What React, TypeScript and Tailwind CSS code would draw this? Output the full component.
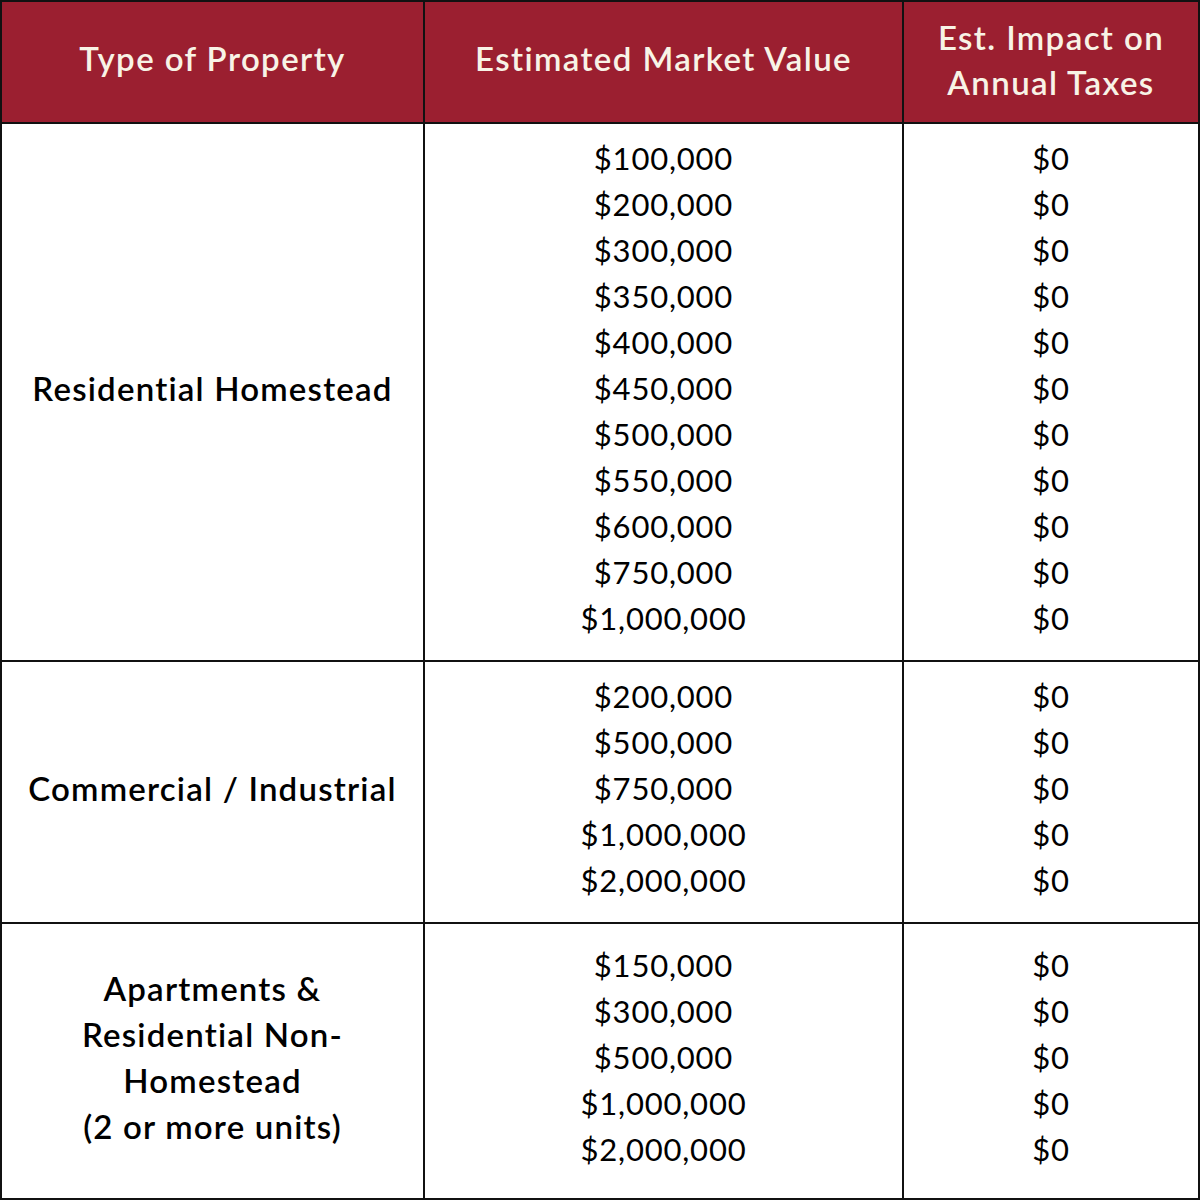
const rows = [
  {
    label: ['Residential Homestead'],
    values: ['$100,000', '$200,000', '$300,000', '$350,000', '$400,000', '$450,000', '$500,000', '$550,000', '$600,000', '$750,000', '$1,000,000'],
    height: 'h-[538px]',
  },
  {
    label: ['Commercial / Industrial'],
    values: ['$200,000', '$500,000', '$750,000', '$1,000,000', '$2,000,000'],
    height: 'h-[262px]',
  },
  {
    label: ['Apartments &', 'Residential Non-', 'Homestead', '(2 or more units)'],
    values: ['$150,000', '$300,000', '$500,000', '$1,000,000', '$2,000,000'],
    height: 'h-[274px]',
  },
];

export default function App() {
  return (
    <div className="w-[1200px] h-[1200px] bg-white font-['Lato',sans-serif] text-black">
      <div className="w-full h-full border-2 border-[#111] flex flex-col">
        {/* header */}
        <div className="grid grid-cols-[423px_479px_1fr] h-[122px] bg-[#9b1f30] text-[#f8f3e6] font-semibold text-[33px] leading-[45px] tracking-[1.4px] text-center border-b-2 border-[#111]">
          <div className="flex items-center justify-center border-r-2 border-[#111] pb-2">Type of Property</div>
          <div className="flex items-center justify-center border-r-2 border-[#111] pb-2">Estimated Market Value</div>
          <div className="flex flex-col items-center justify-center pb-1">
            <span>Est. Impact on</span>
            <span>Annual Taxes</span>
          </div>
        </div>

        {rows.map((row, i) => (
          <div
            key={i}
            className={`grid grid-cols-[423px_479px_1fr] ${row.height} ${i < rows.length - 1 ? 'border-b-2 border-[#111]' : ''} text-center text-[31px] leading-[46px]`}
          >
            <div className="flex flex-col items-center justify-center border-r-2 border-[#111] font-semibold text-[33px] tracking-[1.2px] pb-2">
              {row.label.map((l) => (
                <span key={l}>{l}</span>
              ))}
            </div>
            <div className="flex flex-col items-center justify-center border-r-2 border-[#111] tracking-[0.8px] pb-2">
              {row.values.map((v, j) => (
                <span key={j}>{v}</span>
              ))}
            </div>
            <div className="flex flex-col items-center justify-center tracking-[0.8px] pb-2">
              {row.values.map((_, j) => (
                <span key={j}>$0</span>
              ))}
            </div>
          </div>
        ))}
      </div>
    </div>
  );
}
